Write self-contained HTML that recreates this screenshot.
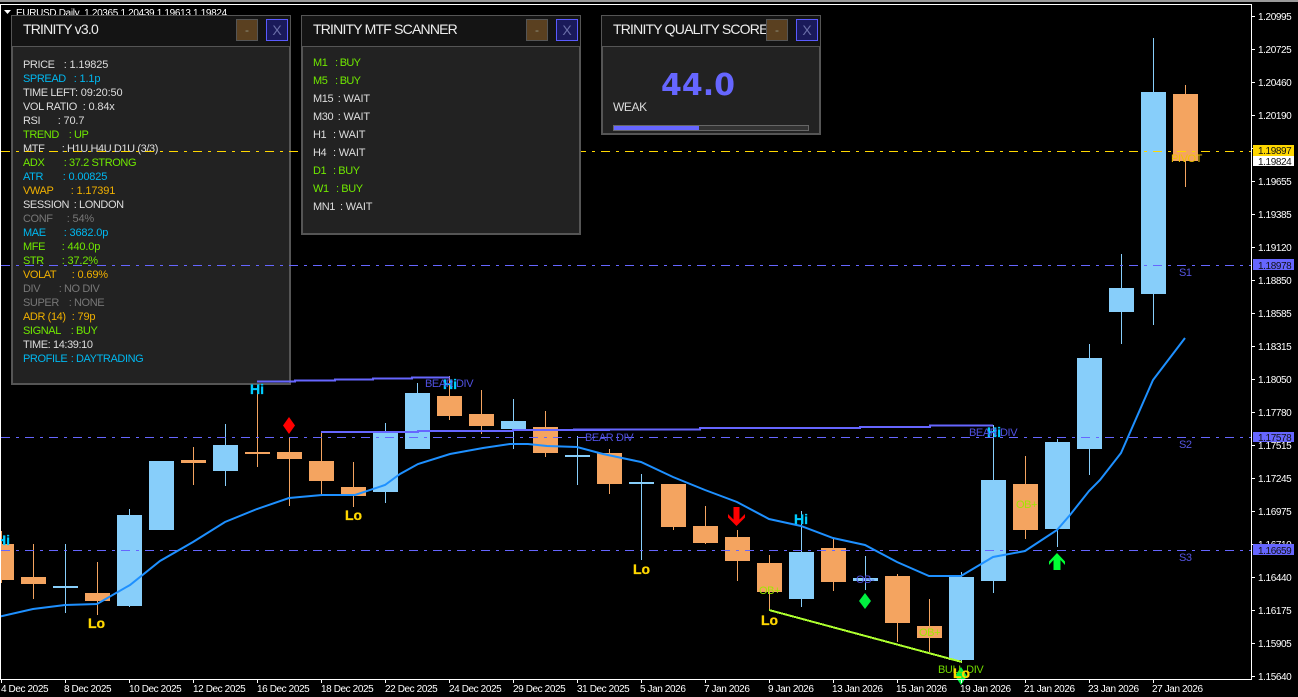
<!DOCTYPE html>
<html><head><meta charset="utf-8"><title>EURUSD Daily</title>
<style>
html,body{margin:0;padding:0;background:#000;width:1298px;height:697px;overflow:hidden}
svg{display:block;position:absolute;left:0;top:0}
text{font-family:"Liberation Sans",sans-serif;white-space:pre}
.ax{font-size:10px;letter-spacing:-.4px;fill:#fff}
.t{font-size:14px;letter-spacing:-.8px;fill:#eee}
.r{font-size:11px;letter-spacing:-.4px}
.v{letter-spacing:-.15px}
.w{fill:#ddd}.b{fill:#00b8f0}.g{fill:#70e800}.y{fill:#f0b000}.n{fill:#777}
.hi{font-size:14px;font-weight:bold;fill:#00ccff;stroke:#00ccff;stroke-width:.3px}
.lo{font-size:14px;font-weight:bold;fill:#ffd700;stroke:#ffd700;stroke-width:.3px}
.lb{font-size:11px;letter-spacing:-.4px}
.c{shape-rendering:crispEdges}
</style></head><body>
<svg width="1298" height="697" viewBox="0 0 1298 697" xmlns="http://www.w3.org/2000/svg">
<rect width="1298" height="697" fill="#000"/>
<rect width="1298" height="2" fill="#9a9a9a"/>

<!-- candles: wicks -->
<path class="c" fill="none" stroke="#f4a460" d="M1185.5 85V187M1025.5 456V539M929.5 599V652M897.5 574V642M833.5 538V591M769.5 555V610M737.5 530V581M705.5 506V544M673.5 484V530M609.5 449V494M545.5 411V457M481.5 390V434M449.5 376V420M353.5 462V507M321.5 432V495M289.5 437V506M257.5 385V467M193.5 447V485M97.5 562V615M33.5 544V599M1.5 531V583"/>
<path class="c" fill="none" stroke="#87cefa" d="M1153.5 38V325M1121.5 254V344M1089.5 344V475M1057.5 439V547M993.5 425V593M961.5 572V662M865.5 556V590M801.5 511V607M641.5 474V560M577.5 436V485M513.5 399V449M417.5 383V449M385.5 423V503M225.5 424V486M129.5 509V607M65.5 544V613"/>
<!-- candles: bodies -->
<g class="c" fill="#f4a460">
<rect x="1173" y="94" width="25" height="67"/>
<rect x="1013" y="484" width="25" height="46"/>
<rect x="917" y="626" width="25" height="12"/>
<rect x="885" y="576" width="25" height="47"/>
<rect x="821" y="548" width="25" height="34"/>
<rect x="757" y="563" width="25" height="29"/>
<rect x="725" y="537" width="25" height="24"/>
<rect x="693" y="526" width="25" height="17"/>
<rect x="661" y="484" width="25" height="43"/>
<rect x="597" y="453" width="25" height="31"/>
<rect x="533" y="427" width="25" height="26"/>
<rect x="469" y="414" width="25" height="12"/>
<rect x="437" y="396" width="25" height="20"/>
<rect x="341" y="487" width="25" height="9"/>
<rect x="309" y="461" width="25" height="20"/>
<rect x="277" y="452" width="25" height="7"/>
<rect x="245" y="452" width="25" height="2"/>
<rect x="181" y="460" width="25" height="3"/>
<rect x="85" y="593" width="25" height="8"/>
<rect x="21" y="577" width="25" height="7"/>
<rect x="-11" y="544" width="25" height="36"/>
</g>
<g class="c" fill="#87cefa">
<rect x="1141" y="92" width="25" height="202"/>
<rect x="1109" y="288" width="25" height="24"/>
<rect x="1077" y="358" width="25" height="91"/>
<rect x="1045" y="442" width="25" height="87"/>
<rect x="981" y="480" width="25" height="101"/>
<rect x="949" y="577" width="25" height="83"/>
<rect x="853" y="578" width="25" height="3"/>
<rect x="789" y="552" width="25" height="47"/>
<rect x="629" y="482" width="25" height="2"/>
<rect x="565" y="455" width="25" height="2"/>
<rect x="501" y="421" width="25" height="8"/>
<rect x="405" y="393" width="25" height="56"/>
<rect x="373" y="433" width="25" height="59"/>
<rect x="213" y="445" width="25" height="26"/>
<rect x="149" y="461" width="25" height="69"/>
<rect x="117" y="515" width="25" height="91"/>
<rect x="53" y="586" width="25" height="2"/>
</g>

<!-- panel 1 -->
<rect class="c" x="11" y="15" width="280" height="370" fill="#555"/>
<rect class="c" x="12" y="16" width="278" height="30" fill="#141414"/>
<rect class="c" x="13" y="47" width="276" height="336" fill="#222"/>
<text class="t" x="23" y="34">TRINITY v3.0</text>
<rect class="c" x="236.500" y="19.500" width="21" height="21" fill="#5a4020" stroke="#555"/>
<rect class="c" x="266.500" y="19.500" width="21" height="21" fill="#1a1a5a" stroke="#5a5aff"/>
<text x="247" y="34" font-size="12" text-anchor="middle" fill="#8f8f7c">-</text>
<text x="277" y="35" font-size="14" text-anchor="middle" fill="#6a6ea8">X</text>

<g class="r">
<text class="w" x="23" y="68">PRICE</text><text class="w v" x="63.700" y="68">: 1.19825</text>
<text class="b" x="23" y="82">SPREAD</text><text class="b v" x="73.700" y="82">: 1.1p</text>
<text class="w" x="23" y="96">TIME LEFT</text><text class="w v" x="75" y="96">: 09:20:50</text>
<text class="w" x="23" y="110">VOL RATIO</text><text class="w v" x="82.700" y="110">: 0.84x</text>
<text class="w" x="23" y="124">RSI</text><text class="w v" x="57.700" y="124">: 70.7</text>
<text class="g" x="23" y="138">TREND</text><text class="g" x="68.700" y="138">: UP</text>
<text class="w" x="23" y="152">MTF</text><text class="w" x="61.700" y="152">: H1U H4U D1U (3/3)</text>
<text class="g" x="23" y="166">ADX</text><text class="g" x="63.700" y="166">: 37.2 STRONG</text>
<text class="b" x="23" y="180">ATR</text><text class="b v" x="62.700" y="180">: 0.00825</text>
<text class="y" x="23" y="194">VWAP</text><text class="y v" x="70.700" y="194">: 1.17391</text>
<text class="w" x="23" y="208">SESSION</text><text class="w" x="73.700" y="208">: LONDON</text>
<text class="n" x="23" y="222">CONF</text><text class="n v" x="66.700" y="222">: 54%</text>
<text class="b" x="23" y="236">MAE</text><text class="b v" x="63.700" y="236">: 3682.0p</text>
<text class="g" x="23" y="250">MFE</text><text class="g v" x="61.700" y="250">: 440.0p</text>
<text class="g" x="23" y="264">STR</text><text class="g v" x="61.700" y="264">: 37.2%</text>
<text class="y" x="23" y="278">VOLAT</text><text class="y v" x="71.700" y="278">: 0.69%</text>
<text class="n" x="23" y="292">DIV</text><text class="n" x="58.700" y="292">: NO DIV</text>
<text class="n" x="23" y="306">SUPER</text><text class="n" x="68.700" y="306">: NONE</text>
<text class="y" x="23" y="320">ADR (14)</text><text class="y v" x="71.700" y="320">: 79p</text>
<text class="g" x="23" y="334">SIGNAL</text><text class="g" x="70.700" y="334">: BUY</text>
<text class="w" x="23" y="348">TIME: 14:39:10</text>
<text class="b" x="23" y="362">PROFILE</text><text class="b" x="70.700" y="362">: DAYTRADING</text>
</g>

<!-- horizontal levels -->
<g class="c" fill="none" stroke-dasharray="9 6 3 6">
<path stroke="#ffd700" d="M1 151.500H1252"/>
<path stroke="#6666ff" d="M1 265.500H1252"/>
<path stroke="#6666ff" d="M1 437.500H1252"/>
<path stroke="#6666ff" d="M1 550.500H1252"/>
</g>

<!-- MA -->
<polyline fill="none" stroke="#1e90ff" stroke-width="2" points="0,616.500 33,609 65,605 97,604 130,585 160,561 193,542 225,522 257,509 289,498 322,495 355,495 385,485 400,474 418,464 450,454 483,448 510,444 528,444 547,446 577,447 603,454 641,462 673,477 705,490 737,502 769,519 801,526 833,538 865,545 897,562 929,576 961,576 993,557 1025,551 1057,530 1070,515 1089,491 1100,480 1121,453 1153,380 1185,338"/>

<!-- trend lines -->
<g class="c" fill="none" stroke="#6666ff" stroke-width="2">
<path d="M257 381.500H295V380.500H335V379.500H373V378.500H412V377.500H450"/>
<path d="M321 432H418V431H513V430H610"/>
<path d="M573 429.500H700V428H860V427H930V425.500H993"/>
</g>
<line x1="769" y1="610" x2="962" y2="662" stroke="#adff2f" stroke-width="2" class="c"/>

<!-- markers -->
<polygon points="289,417 295,425.500 289,434 283,425.500" fill="#ff0000"/>
<polygon points="865,593 871,601 865,609 859,601" fill="#00f040"/>
<polygon points="1057,553 1065,561.500 1065,565 1060.500,560 1060.500,570 1053.500,570 1053.500,560 1049,565 1049,561.500" fill="#00ff33"/>
<polygon points="733.500,507 739.500,507 739.500,519.500 745,514 745,517.500 736.500,526 728,517.500 728,514 733.500,519.500" fill="#ff0000"/>
<polygon points="961,667 967,676 961,685 955,676" fill="#00f040"/>

<text class="hi" x="250" y="394">Hi</text>
<text class="hi" x="443" y="389">Hi</text>
<text class="hi" x="794" y="524">Hi</text>
<text class="hi" x="987" y="437">Hi</text>
<text class="hi" x="-4" y="545">Hi</text>
<text class="lo" x="88" y="628">Lo</text>
<text class="lo" x="345" y="520">Lo</text>
<text class="lo" x="633" y="574">Lo</text>
<text class="lo" x="761" y="625">Lo</text>

<g class="lb">
<text x="425" y="387" fill="#5050e0">BEAR DIV</text>
<text x="585" y="441" fill="#5050e0">BEAR DIV</text>
<text x="969" y="436" fill="#5050e0">BEAR DIV</text>
<text x="938" y="673" fill="#70d800">BULL DIV</text>
<text x="759" y="594" fill="#9fe800">OB+</text>
<text x="919" y="636" fill="#9fe800">OB+</text>
<text x="1016" y="508" fill="#9fe800">OB+</text>
<text x="856" y="583" fill="#5050e0">OB-</text>
<text x="1171" y="162" fill="#f0c400">PIVOT</text>
<text x="1179" y="276" fill="#5555e0">S1</text>
<text x="1179" y="448" fill="#5555e0">S2</text>
<text x="1179" y="561" fill="#5555e0">S3</text>
</g>
<text class="lo" x="953" y="678">Lo</text>

<!-- chart frame -->
<g class="c" fill="#fff">
<rect x="0" y="4" width="1252" height="1"/>
<rect x="0" y="4" width="1" height="676"/>
<rect x="1251" y="4" width="1" height="676"/>
<rect x="0" y="679" width="1252" height="1"/>
</g>

<!-- header -->
<polygon points="4,10 11,10 7.500,14" fill="#fff"/>
<text x="16" y="16" font-size="10" letter-spacing="-.33" fill="#fff">EURUSD,Daily  1.20365 1.20439 1.19613 1.19824</text>

<!-- panel 1 top edge again, covers header -->
<rect class="c" x="11" y="15" width="225" height="1" fill="#555"/>
<rect class="c" x="12" y="16" width="200" height="3" fill="#141414"/>

<!-- panel 2 -->
<rect class="c" x="301" y="15" width="280" height="220" fill="#555"/>
<rect class="c" x="302" y="16" width="278" height="30" fill="#141414"/>
<rect class="c" x="303" y="47" width="276" height="186" fill="#222"/>
<text class="t" x="313" y="34">TRINITY MTF SCANNER</text>
<rect class="c" x="526.500" y="19.500" width="21" height="21" fill="#5a4020" stroke="#555"/>
<rect class="c" x="556.500" y="19.500" width="21" height="21" fill="#1a1a5a" stroke="#5a5aff"/>
<text x="537" y="34" font-size="12" text-anchor="middle" fill="#8f8f7c">-</text>
<text x="567" y="35" font-size="14" text-anchor="middle" fill="#6a6ea8">X</text>
<g class="r">
<text class="g" x="313" y="66">M1</text><text class="g" x="335" y="66" letter-spacing="-.7">: BUY</text>
<text class="g" x="313" y="84">M5</text><text class="g" x="335" y="84" letter-spacing="-.7">: BUY</text>
<text class="w" x="313" y="102">M15</text><text class="w v" x="337.700" y="102">: WAIT</text>
<text class="w" x="313" y="120">M30</text><text class="w v" x="337.700" y="120">: WAIT</text>
<text class="w" x="313" y="138">H1</text><text class="w v" x="333" y="138">: WAIT</text>
<text class="w" x="313" y="156">H4</text><text class="w v" x="333" y="156">: WAIT</text>
<text class="g" x="313" y="174">D1</text><text class="g" x="333" y="174">: BUY</text>
<text class="g" x="313" y="192">W1</text><text class="g" x="336" y="192">: BUY</text>
<text class="w" x="313" y="210">MN1</text><text class="w v" x="340" y="210">: WAIT</text>
</g>

<!-- panel 3 -->
<rect class="c" x="601" y="15" width="220" height="120" fill="#555"/>
<rect class="c" x="602" y="16" width="218" height="30" fill="#141414"/>
<rect class="c" x="603" y="47" width="216" height="86" fill="#222"/>
<text class="t" x="613" y="34">TRINITY QUALITY SCORE</text>
<rect class="c" x="766.500" y="19.500" width="21" height="21" fill="#5a4020" stroke="#555"/>
<rect class="c" x="796.500" y="19.500" width="21" height="21" fill="#1a1a5a" stroke="#5a5aff"/>
<text x="777" y="34" font-size="12" text-anchor="middle" fill="#8f8f7c">-</text>
<text x="807" y="35" font-size="14" text-anchor="middle" fill="#6a6ea8">X</text>
<text x="661" y="95" style="font-family:'DejaVu Sans',sans-serif;font-weight:bold;font-size:30px" fill="#6666ff">44.0</text>
<text x="613" y="111" font-size="12" letter-spacing="-.4" fill="#ddd">WEAK</text>
<rect class="c" x="613" y="125" width="196" height="6" fill="#666"/>
<rect class="c" x="614" y="126" width="194" height="4" fill="#333"/>
<rect class="c" x="614" y="126" width="85" height="4" fill="#6666ff"/>

<!-- price axis -->
<path class="c" stroke="#fff" fill="none" d="M1252 16.500h3M1252 49.500h3M1252 82.500h3M1252 115.500h3M1252 148.500h3M1252 181.500h3M1252 214.500h3M1252 247.500h3M1252 280.500h3M1252 313.500h3M1252 346.500h3M1252 379.500h3M1252 412.500h3M1252 445.500h3M1252 478.500h3M1252 511.500h3M1252 544.500h3M1252 577.500h3M1252 610.500h3M1252 643.500h3M1252 676.500h3"/>
<g class="ax">
<text x="1258" y="20">1.20995</text>
<text x="1258" y="53">1.20725</text>
<text x="1258" y="86">1.20460</text>
<text x="1258" y="119">1.20190</text>
<text x="1258" y="185">1.19655</text>
<text x="1258" y="218">1.19385</text>
<text x="1258" y="251">1.19120</text>
<text x="1258" y="284">1.18850</text>
<text x="1258" y="317">1.18585</text>
<text x="1258" y="350">1.18315</text>
<text x="1258" y="383">1.18050</text>
<text x="1258" y="416">1.17780</text>
<text x="1258" y="449">1.17515</text>
<text x="1258" y="482">1.17245</text>
<text x="1258" y="515">1.16975</text>
<text x="1258" y="548">1.16710</text>
<text x="1258" y="581">1.16440</text>
<text x="1258" y="614">1.16175</text>
<text x="1258" y="647">1.15905</text>
<text x="1258" y="680">1.15640</text>
</g>
<rect class="c" x="1253" y="145" width="41" height="11" fill="#ffd700"/>
<rect class="c" x="1253" y="156" width="41" height="10" fill="#fff"/>
<rect class="c" x="1253" y="259" width="41" height="11" fill="#6666ff"/>
<rect class="c" x="1253" y="432" width="41" height="10" fill="#6666ff"/>
<rect class="c" x="1253" y="544" width="41" height="11" fill="#6666ff"/>
<g class="ax" style="fill:#111">
<text x="1258" y="154">1.19897</text>
<text x="1258" y="165">1.19824</text>
<text x="1258" y="269">1.18978</text>
<text x="1258" y="441">1.17578</text>
<text x="1258" y="554">1.16659</text>
</g>

<!-- date axis -->
<path class="c" stroke="#fff" fill="none" d="M1.500 680v3M65.500 680v3M129.500 680v3M193.500 680v3M257.500 680v3M321.500 680v3M385.500 680v3M449.500 680v3M513.500 680v3M577.500 680v3M641.500 680v3M705.500 680v3M769.500 680v3M833.500 680v3M897.500 680v3M961.500 680v3M1025.500 680v3M1089.500 680v3M1153.500 680v3"/>
<g class="ax">
<text x="1" y="692">4 Dec 2025</text>
<text x="64" y="692">8 Dec 2025</text>
<text x="129" y="692">10 Dec 2025</text>
<text x="193" y="692">12 Dec 2025</text>
<text x="257" y="692">16 Dec 2025</text>
<text x="321" y="692">18 Dec 2025</text>
<text x="385" y="692">22 Dec 2025</text>
<text x="449" y="692">24 Dec 2025</text>
<text x="513" y="692">29 Dec 2025</text>
<text x="577" y="692">31 Dec 2025</text>
<text x="640" y="692">5 Jan 2026</text>
<text x="704" y="692">7 Jan 2026</text>
<text x="768" y="692">9 Jan 2026</text>
<text x="832" y="692">13 Jan 2026</text>
<text x="896" y="692">15 Jan 2026</text>
<text x="960" y="692">19 Jan 2026</text>
<text x="1024" y="692">21 Jan 2026</text>
<text x="1088" y="692">23 Jan 2026</text>
<text x="1152" y="692">27 Jan 2026</text>
</g>
</svg>
</body></html>
